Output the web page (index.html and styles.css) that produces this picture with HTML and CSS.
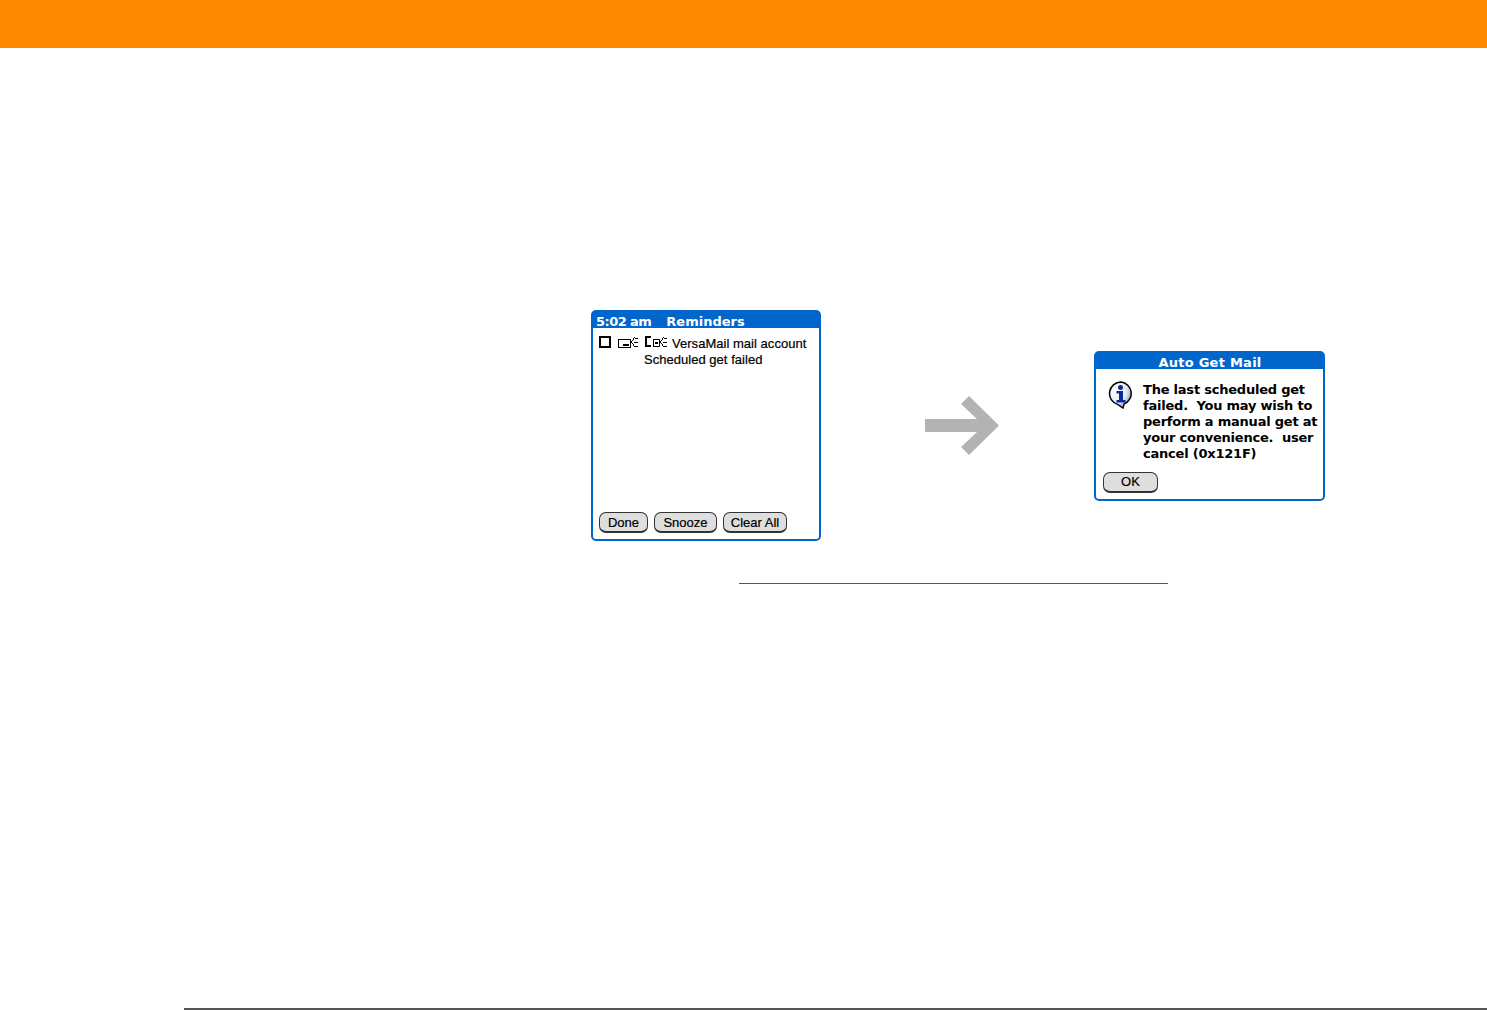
FILE: index.html
```html
<!DOCTYPE html>
<html lang="en">
<head>
<meta charset="utf-8">
<title>Auto Get Mail</title>
<link rel="stylesheet" href="styles.css">
</head>
<body>
<header class="banner"></header>
<main class="content">
  <div class="figure">
    <section class="palm palm-reminders">
      <h2 class="palm-title palm-title-left"><span class="title-time">5:02 am</span><span>Reminders</span></h2>
      <div class="palm-body reminders-body">
        <div class="reminder">
          <svg class="icon-check" width="13" height="13" viewBox="0 0 13 13" shape-rendering="crispEdges"><path d="M1 1h10v10H1z" fill="#fff" stroke="#000" stroke-width="2"/></svg>
          <svg class="icon-mail" width="21" height="13" viewBox="0 0 21 13" shape-rendering="crispEdges"><path d="M.5 3.500h12v8H.5z" fill="none" stroke="#000"/><path d="M5 8h6v2H5zM16 1h1v1h-1zM15 2h1v2h-1zM14 4h1v1h-1zM13 5h1v2h-1zM14 7h1v1h-1zM15 8h1v2h-1zM16 10h1v1h-1zM17 2h3v1h-3zM16 6h4v1h-4zM17 10h3v1h-3z"/></svg>
          <div class="reminder-text">
            <div class="reminder-line">
              <svg class="icon-alert" width="23" height="13" viewBox="0 0 23 13" shape-rendering="crispEdges"><path d="M0 0h6v2H2v7h4v2H0z"/><path d="M8.500 3.500h6v7h-6z" fill="none" stroke="#000"/><path d="M10 6h3v2h-3zM18 1h1v1h-1zM17 2h1v2h-1zM16 4h1v1h-1zM15 5h1v2h-1zM16 7h1v1h-1zM17 8h1v2h-1zM18 10h1v1h-1zM19 2h3v1h-3zM18 6h4v1h-4zM19 10h3v1h-3z"/></svg>
              <span class="reminder-account">VersaMail mail account</span>
            </div>
            <div class="reminder-sub">Scheduled get failed</div>
          </div>
        </div>
        <div class="button-row">
          <span class="palm-btn btn-done">Done</span>
          <span class="palm-btn btn-snooze">Snooze</span>
          <span class="palm-btn btn-clear">Clear All</span>
        </div>
      </div>
    </section>

    <svg class="arrow" width="74" height="60" viewBox="0 0 74 60"><path d="M0 23h52L36 8l8-8 30 29.500-30 29.500-8-8 16-15H0z" fill="#b3b3b3"/></svg>

    <section class="palm palm-dialog">
      <h2 class="palm-title palm-title-center">Auto Get Mail</h2>
      <div class="palm-body dialog-body">
        <div class="dialog-msg">
          <svg class="icon-info" width="26" height="28" viewBox="0 0 26 28">
            <defs><radialGradient id="bub" cx=".32" cy=".32" r=".85"><stop offset="0" stop-color="#fff"/><stop offset=".55" stop-color="#e4ebf6"/><stop offset="1" stop-color="#6f88b0"/></radialGradient></defs>
            <path d="M13 1a11.500 11.500 0 0 0-3 22.600L15 27l1-3.900A11.500 11.500 0 0 0 13 1z" fill="url(#bub)" stroke="#000" stroke-width="1.500"/>
            <circle cx="12.500" cy="6.500" r="2.500" fill="#0a2a9c"/>
            <path d="M8.500 10H15v9h2.500v2.500h-9V19H11v-6.500H8.500z" fill="#0a2a9c"/>
          </svg>
          <p class="dialog-text">The last scheduled get<br>failed.&nbsp; You may wish to<br>perform a manual get at<br>your convenience.&nbsp; user<br>cancel (0x121F)</p>
        </div>
        <span class="palm-btn btn-ok">OK</span>
      </div>
    </section>
  </div>
  <div class="caption-rule"></div>
</main>
<div class="footer-rule"></div>
</body>
</html>
```
FILE: styles.css
```css
* { box-sizing: border-box; }
html, body { margin: 0; height: 1010px; overflow: hidden; background: #fff; }
body { display: flex; flex-direction: column; font-family: "Liberation Sans", Arial, sans-serif; color: #000; }

.banner { height: 48px; flex: none; background: #ff8a00; }
.content { flex: 1; padding: 262px 0 0 591px; }
.footer-rule { flex: none; height: 2px; margin-left: 184px; background: #555; }

.figure { width: 734px; height: 231px; display: flex; align-items: center; }
.arrow { flex: none; margin-left: 104px; margin-right: 95px; }

.palm { flex: none; width: 230px; display: flex; flex-direction: column; border: 2px solid #0066cc; border-radius: 5px; background: #fff; }
.palm-reminders { height: 231px; }
.palm-dialog { width: 231px; height: 150px; }

.palm-title { margin: 0; height: 16px; flex: none; background: #0066cc; color: #fff; font: bold 13px/19px "DejaVu Sans", sans-serif; }
.palm-title-left { display: flex; gap: 15px; padding-left: 3px; }
.title-time { letter-spacing: -.55px; }
.palm-title-center { text-align: center; letter-spacing: .25px; padding-left: 1px; }

.palm-body { flex: 1; display: flex; flex-direction: column; }

.reminders-body { padding: 8px 0 6px 6px; justify-content: space-between; }
.reminder { display: flex; align-items: flex-start; }
.icon-check { flex: none; }
.icon-mail { flex: none; margin-left: 6px; }
.reminder-text { margin-left: 6px; font-size: 13px; line-height: 16px; -webkit-text-stroke: .2px #000; }
.reminder-line { display: flex; align-items: flex-start; height: 16px; }
.reminder-account { margin-left: 4px; letter-spacing: .03px; }
.reminder-sub { margin-left: -1px; letter-spacing: .03px; }

.button-row { display: flex; gap: 6px; }
.palm-btn { display: flex; align-items: center; justify-content: center; height: 21px; padding-top: 1px; background: #dedede; border: 1px solid #333; border-bottom-width: 2px; border-radius: 7px; font-size: 13px; line-height: 16px; flex: none; -webkit-text-stroke: .2px #000; }
.btn-done { width: 49px; }
.btn-snooze { width: 63px; }
.btn-clear { width: 64px; }
.btn-ok { width: 55px; margin-left: 7px; }

.dialog-body { padding: 12px 0 6px; justify-content: space-between; }
.dialog-msg { display: flex; align-items: flex-start; padding-left: 12px; }
.icon-info { flex: none; margin-right: 9px; }
.dialog-text { margin: 1px 0 0; font: bold 13px/16px "DejaVu Sans", sans-serif; letter-spacing: -.22px; white-space: nowrap; }

.caption-rule { width: 429px; height: 1px; margin: 42px 0 0 148px; background: #555; }
```
